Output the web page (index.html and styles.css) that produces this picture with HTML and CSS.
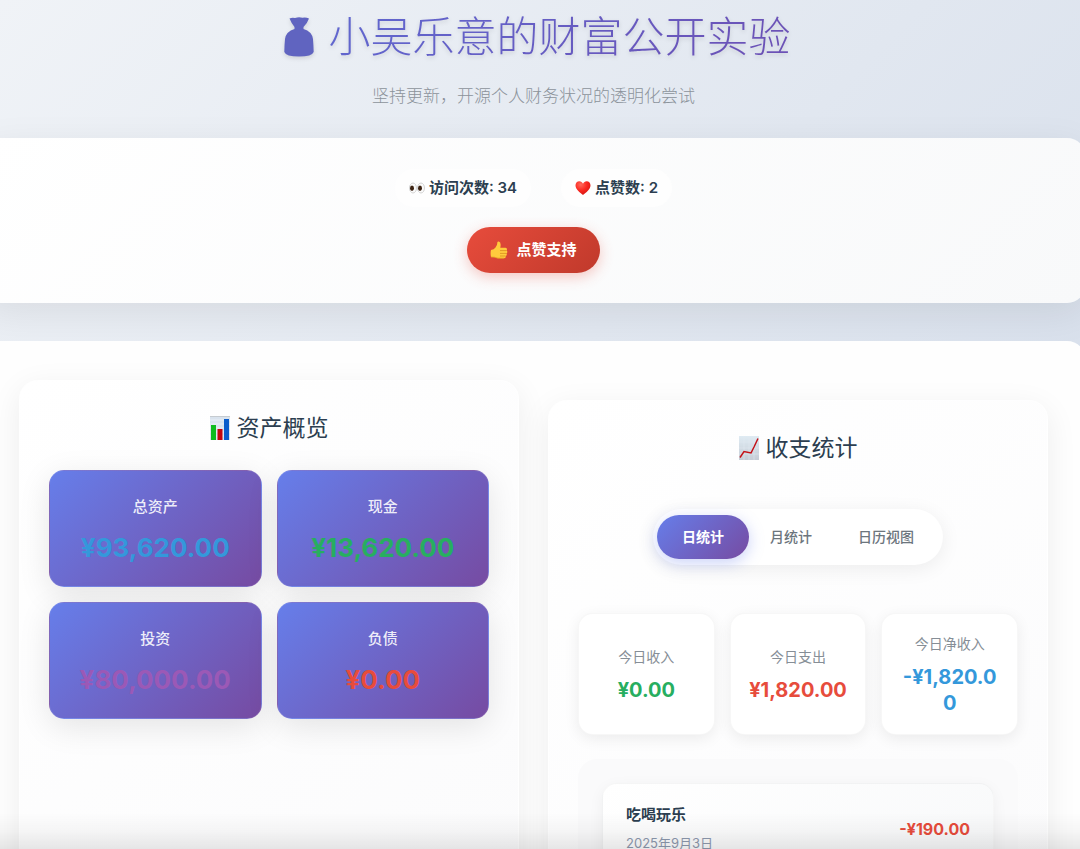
FILE: index.html
```
<!DOCTYPE html>
<html lang="zh-CN">
<head>
  <meta charset="UTF-8">
  <meta name="viewport" content="width=device-width, initial-scale=1.0">
  <title>小吴乐意的财富公开实验</title>
  <link rel="stylesheet" href="styles.css">
</head>
<body>
  <div class="container">

    <header class="header">
      <h1>
        <svg class="icon-bag" viewBox="0 0 30 40" aria-hidden="true">
          <path d="M5.5 1.5Q8 0.300 11 1Q15-.5 18.500.8Q22 .200 25 1.500Q23.500 6 19.500 10L19.500 12Q28 14.500 29 22Q29.500 28 29.700 35Q28 39.500 15 39.500Q2 39.500.3 35Q.4 28 1 22Q2 14.500 10.500 12L10.500 10Q7 5.500 5.500 1.500Z" fill="#6064c0"/>
        </svg>
        <span class="title-text">小吴乐意的财富公开实验</span>
      </h1>
      <p class="subtitle">坚持更新，开源个人财务状况的透明化尝试</p>
    </header>

    <section class="visit-panel">
      <div class="visit-stats">
        <span class="visit-item">
          <svg class="icon-small" viewBox="0 0 16 16" aria-hidden="true">
            <ellipse cx="4" cy="8" rx="3.500" ry="5" fill="#fafafa" stroke="#c9c9c9" stroke-width=".8"/>
            <ellipse cx="12" cy="8" rx="3.500" ry="5" fill="#fafafa" stroke="#c9c9c9" stroke-width=".8"/>
            <ellipse cx="3" cy="8.200" rx="2" ry="2.700" fill="#3d2413"/>
            <ellipse cx="11" cy="8.200" rx="2" ry="2.700" fill="#3d2413"/>
          </svg>
          <span>访问次数: 34</span>
        </span>
        <span class="visit-item">
          <svg class="icon-small" viewBox="0 0 16 16" aria-hidden="true">
            <defs>
              <radialGradient id="heart" cx=".35" cy=".25" r=".8">
                <stop offset="0" stop-color="#ff6a5c"/>
                <stop offset=".5" stop-color="#fb2a22"/>
                <stop offset="1" stop-color="#d3120f"/>
              </radialGradient>
            </defs>
            <path d="M8 15C5 12.500.5 9.500.5 5.300C.5 2.800 2.300 1.200 4.300 1.200C6 1.200 7.300 2.200 8 3.700C8.700 2.200 10 1.200 11.700 1.200C13.700 1.200 15.500 2.800 15.500 5.300C15.500 9.500 11 12.500 8 15Z" fill="url(#heart)"/>
          </svg>
          <span>点赞数: 2</span>
        </span>
      </div>
      <button type="button" class="like-btn">
        <svg class="icon-thumb" viewBox="0 0 18 18" aria-hidden="true">
          <path d="M1 9Q4 8.500 5.500 6.500Q7.500 4 7.300 1.500Q7.500.3 8.800.5Q11.500 1.300 10.300 6.800L15.500 6.800Q17 7 17 8.300Q17 9.300 16.300 9.600Q17.500 10 17.300 11.200Q17.200 12.200 16.300 12.400Q17 13 16.700 14Q16.400 14.900 15.500 15Q16 15.600 15.700 16.300Q15.300 17.200 14 17.200L8 17.200Q5 17 4 16L1 16Q.2 12 1 9Z" fill="#ffcb3d"/>
          <path d="M10 9.600H16.300M10 12.400H16.300M10 15H15.500" stroke="#dc9423" stroke-width=".9" fill="none"/>
          <path d="M1 16Q5 16 8 17.200L14 17.200" stroke="#e29a24" stroke-width=".8" fill="none"/>
        </svg>
        <span>点赞支持</span>
      </button>
    </section>

    <main class="content">
      <section class="card">
        <h2>
          <svg class="icon-title" viewBox="0 0 20 24" aria-hidden="true">
            <rect width="20" height="24" fill="#d9e3ee"/>
            <path d="M0 4H20M0 8H20M0 12H20M0 16H20M0 20H20" stroke="#eef3f8" stroke-width=".8"/>
            <rect width="20" height="1" fill="#c6cbd0"/>
            <rect x="1" y="9" width="5" height="15" fill="#0dbb1d"/>
            <rect x="7.500" y="13" width="5" height="11" fill="#c4060c"/>
            <rect x="14" y="3" width="5" height="21" fill="#0a5ccb"/>
          </svg>
          <span>资产概览</span>
        </h2>
        <div class="asset-grid">
          <div class="asset-item">
            <div class="asset-label">总资产</div>
            <div class="asset-value total">¥93,620.00</div>
          </div>
          <div class="asset-item">
            <div class="asset-label">现金</div>
            <div class="asset-value cash">¥13,620.00</div>
          </div>
          <div class="asset-item">
            <div class="asset-label">投资</div>
            <div class="asset-value invest">¥80,000.00</div>
          </div>
          <div class="asset-item">
            <div class="asset-label">负债</div>
            <div class="asset-value debt">¥0.00</div>
          </div>
        </div>
      </section>

      <section class="card card-stats">
        <h2>
          <svg class="icon-title" viewBox="0 0 20 24" aria-hidden="true">
            <defs>
              <linearGradient id="paper" x1="0" y1="0" x2="0" y2="1">
                <stop offset="0" stop-color="#dfebf3"/>
                <stop offset="1" stop-color="#c5ccd5"/>
              </linearGradient>
            </defs>
            <rect width="20" height="24" fill="url(#paper)"/>
            <path d="M0 6H20M0 12H20M0 18H20M5 0V24M10 0V24M15 0V24" stroke="#e3ebf1" stroke-width=".5"/>
            <path d="M1 21.500L5 15.500L12 17L15 11L19 2.500" fill="none" stroke="#c41218" stroke-width="1.500"/>
          </svg>
          <span>收支统计</span>
        </h2>
        <div class="tabs">
          <button type="button" class="tab active">日统计</button>
          <button type="button" class="tab">月统计</button>
          <button type="button" class="tab">日历视图</button>
        </div>

        <div class="summary">
          <div class="summary-item">
            <div class="summary-label">今日收入</div>
            <div class="summary-value income">¥0.00</div>
          </div>
          <div class="summary-item">
            <div class="summary-label">今日支出</div>
            <div class="summary-value expense">¥1,820.00</div>
          </div>
          <div class="summary-item">
            <div class="summary-label">今日净收入</div>
            <div class="summary-value net">-¥1,820.00</div>
          </div>
        </div>

        <div class="records">
          <div class="record">
            <div>
              <div class="record-name">吃喝玩乐</div>
              <div class="record-date">2025年9月3日</div>
            </div>
            <div class="record-amount">-¥190.00</div>
          </div>
        </div>
      </section>
    </main>

  </div>
</body>
</html>
```
FILE: styles.css
```
* {
  box-sizing: border-box;
  margin: 0;
  padding: 0;
}
body {
  height: 100vh;
  overflow: hidden;
  font-family: Inter, "Noto Sans CJK SC", sans-serif;
  color: #2c3e50;
  background: linear-gradient(135deg, #f0f3f7 0%, #c3cfe2 100%) 0 0 / 100% 1700px;
}
/* sombra inferior de la ventana */
body::after {
  content: "";
  position: fixed;
  left: 0;
  right: 0;
  bottom: 0;
  height: 36px;
  background: linear-gradient(to bottom, rgba(0, 0, 0, 0), rgba(0, 0, 0, 0.03) 50%, rgba(0, 0, 0, 0.09));
  pointer-events: none;
}
button {
  font-family: inherit;
  border: none;
  cursor: pointer;
}
.container {
  margin: 0 -6px 0 -19px;
}

.header {
  padding: 7px 0 30px;
  text-align: center;
}
h1 {
  display: flex;
  justify-content: center;
  align-items: center;
  gap: 14px;
  margin-left: 8px;
  font-size: 42px;
  font-weight: 200;
  line-height: 60px;
}
.title-text {
  background: linear-gradient(135deg, #6068d0, #6c50b4);
  -webkit-background-clip: text;
  background-clip: text;
  color: transparent;
  filter: drop-shadow(0 2px 2px rgba(0, 0, 0, 0.12));
}
.icon-bag {
  width: 30px;
  height: 40px;
  filter: drop-shadow(0 2px 2px rgba(0, 0, 0, 0.12));
}
.subtitle {
  margin-top: 17px;
  font-size: 17px;
  font-weight: 300;
  line-height: 24px;
  color: #8c939b;
}

.visit-panel {
  display: flex;
  flex-direction: column;
  align-items: center;
  gap: 20px;
  padding: 31px 30px 30px;
  margin-bottom: 38px;
  border-radius: 19px;
  background: linear-gradient(135deg, #ffffff, #f8f9fa);
  box-shadow: 0 10px 38px rgba(0, 0, 0, 0.08);
}
.visit-stats {
  display: flex;
  gap: 30px;
}
.visit-item {
  display: flex;
  align-items: center;
  gap: 4px;
  padding: 8px 14px;
  border-radius: 19px;
  background: #fefefe;
  font-size: 15px;
  font-weight: 600;
  line-height: 22px;
}
.icon-small {
  width: 16px;
  height: 16px;
}
.like-btn {
  display: flex;
  align-items: center;
  gap: 8px;
  padding: 12px 23px;
  border-radius: 23px;
  background: linear-gradient(135deg, #e74c3c, #c0392b);
  box-shadow: 0 4px 14px rgba(231, 76, 60, 0.3);
  color: white;
  font-size: 15px;
  font-weight: 600;
  line-height: 22px;
}
.icon-thumb {
  width: 18px;
  height: 18px;
}

.content {
  display: grid;
  grid-template-columns: 1fr 1fr;
  gap: 29px;
  padding: 39px 38px;
  border-radius: 19px;
  background: #fefefe;
}
.card {
  padding: 29px;
  border: 1px solid rgba(255, 255, 255, 0.8);
  border-radius: 19px;
  background: linear-gradient(145deg, #ffffff, #fbfbfc);
  box-shadow: 0 8px 32px rgba(0, 0, 0, 0.07);
}
.card-stats {
  margin-top: 20px;
}
h2 {
  display: flex;
  justify-content: center;
  align-items: center;
  gap: 7px;
  margin-bottom: 24px;
  font-size: 23px;
  font-weight: 400;
  line-height: 36px;
}
.icon-title {
  width: 20px;
  height: 24px;
}

.asset-grid {
  display: grid;
  grid-template-columns: 1fr 1fr;
  gap: 15px;
}
.asset-item {
  padding: 25px 16px 22px;
  border: 1px solid rgba(255, 255, 255, 0.1);
  border-radius: 15px;
  background: linear-gradient(135deg, #667eea, #764ba2);
  box-shadow: 0 8px 32px rgba(0, 0, 0, 0.1);
  text-align: center;
}
.asset-label {
  margin-bottom: 13px;
  font-size: 15px;
  font-weight: 500;
  line-height: 22px;
  color: rgba(255, 255, 255, 0.9);
}
.asset-value {
  font-size: 26px;
  font-weight: 700;
  line-height: 33px;
}
.total,
.net {
  color: #3498db;
}
.cash,
.income {
  color: #27ae60;
}
.invest {
  color: #9b59b6;
}
.debt,
.expense {
  color: #e74c3c;
}

.tabs {
  display: flex;
  width: fit-content;
  margin: 43px auto 48px;
  padding: 5px;
  border: 1px solid rgba(255, 255, 255, 0.8);
  border-radius: 28px;
  background: #ffffff;
  box-shadow: 0 4px 20px rgba(0, 0, 0, 0.07);
}
.tab {
  padding: 12px 23px;
  border-radius: 22px;
  background: transparent;
  color: #6c757d;
  font-size: 14px;
  font-weight: 500;
  line-height: 20px;
}
.tab.active {
  margin: 0 -2px;
  padding: 12px 25px;
  background: linear-gradient(135deg, #667eea, #764ba2);
  box-shadow: 0 4px 15px rgba(102, 126, 234, 0.35);
  color: white;
  font-weight: 600;
}

.summary {
  display: grid;
  grid-template-columns: repeat(3, 1fr);
  gap: 15px;
  margin-bottom: 24px;
}
.summary-item {
  display: flex;
  flex-direction: column;
  justify-content: center;
  padding: 20px 18px 18px;
  border: 1px solid rgba(0, 0, 0, 0.03);
  border-radius: 15px;
  background: #ffffff;
  box-shadow: 0 4px 15px rgba(0, 0, 0, 0.07);
  text-align: center;
}
.summary-label {
  margin-bottom: 10px;
  font-size: 14px;
  line-height: 20px;
  color: #868e96;
}
.summary-value {
  font-size: 20px;
  font-weight: 700;
  line-height: 26px;
  word-break: break-all;
}

.records {
  padding: 24px;
  border-radius: 19px;
  background: #fafafb;
}
.record {
  display: flex;
  justify-content: space-between;
  align-items: center;
  padding: 20px 23px;
  border: 1px solid rgba(0, 0, 0, 0.03);
  border-radius: 15px;
  background: linear-gradient(145deg, #ffffff, #f8f9fa);
  box-shadow: 0 4px 15px rgba(0, 0, 0, 0.05);
}
.record-name {
  margin-bottom: 7px;
  font-size: 15px;
  font-weight: 600;
  line-height: 22px;
}
.record-date {
  font-size: 13px;
  line-height: 20px;
  color: #8e9aaf;
}
.record-amount {
  color: #e74c3c;
  font-size: 16px;
  font-weight: 700;
}
```
